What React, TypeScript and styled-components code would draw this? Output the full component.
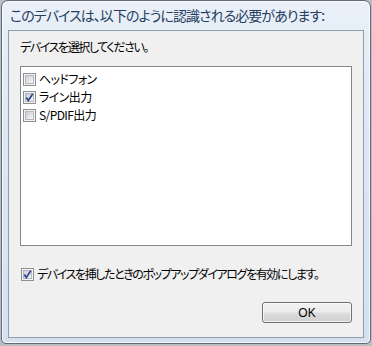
import React from 'react';
import styled, { createGlobalStyle } from 'styled-components';

const Global = createGlobalStyle`
  html, body {
    margin: 0;
    padding: 0;
    background: #b9bcc0;
  }
  * {
    box-sizing: border-box;
  }
`;

const font = `"Noto Sans CJK JP", "Liberation Sans", sans-serif`;

const Window = styled.div`
  width: 370px;
  height: 344px;
  margin-left: 1px;
  display: flex;
  flex-direction: column;
  padding: 0 6px 5px 6px;
  border: 1px solid #5f6b78;
  border-radius: 7px 7px 5px 5px;
  background: linear-gradient(180deg, #e9f0f9 0%, #dde7f3 40%, #d5e1ef 100%);
  box-shadow: inset 0 0 0 1px rgba(255, 255, 255, 0.75);
`;

const TitleBar = styled.div`
  height: 29px;
  display: flex;
  align-items: center;
  padding-left: 2px;
  padding-bottom: 1px;
  font-family: ${font};
  font-feature-settings: "palt";
  font-size: 14px;
  color: #263d5c;
  white-space: nowrap;
  letter-spacing: -0.95px;
`;

const Panel = styled.div`
  flex: 1;
  display: flex;
  flex-direction: column;
  border: 1px solid #8f9db0;
  background: #f0f0f0;
  padding-top: 8px;
  font-family: ${font};
  font-feature-settings: "palt";
  font-size: 12px;
  letter-spacing: -1.4px;
  color: #000;
`;

const Label = styled.div`
  height: 16px;
  line-height: 16px;
  padding-left: 11px;
  white-space: nowrap;
`;

const ListBox = styled.div`
  margin: 11px 11px 0 11px;
  height: 180px;
  border: 1px solid #828790;
  background: #fff;
  padding: 3px 2px;
  letter-spacing: -0.6px;
`;

const Row = styled.label`
  display: flex;
  align-items: center;
  height: 18px;
  gap: 3px;
  white-space: nowrap;
`;

const Box = styled.span`
  position: relative;
  flex: none;
  width: 13px;
  height: 13px;
  border: 1px solid #8e8f8f;
  background: #f4f4f4;
  &::before {
    content: '';
    position: absolute;
    inset: 1px;
    background: linear-gradient(135deg, #c9ccd2 0%, #e4e5e8 55%, #f6f6f6 100%);
    border: 1px solid #b4b7bd;
  }
  svg {
    position: absolute;
    left: 0;
    top: 0;
  }
`;

const Text = styled.span`
  line-height: 18px;
`;

const Options = styled.div`
  margin-top: 19px;
  padding-left: 12px;
`;

const Footer = styled.div`
  display: flex;
  justify-content: flex-end;
  margin-top: 19px;
  padding-right: 11px;
`;

const Button = styled.button`
  width: 90px;
  height: 21px;
  padding: 0;
  border: 1px solid #707070;
  border-radius: 3px;
  background: linear-gradient(180deg, #f2f2f2 0%, #ebebeb 48%, #dddddd 52%, #cfcfcf 100%);
  box-shadow: inset 0 0 0 1px rgba(255, 255, 255, 0.7);
  font-family: "Liberation Sans", sans-serif;
  font-size: 12px;
  color: #000;
`;

function Check({ checked }: { checked?: boolean }) {
  return (
    <Box>
      {checked && (
        <svg width="11" height="11" viewBox="0 0 11 11">
          <path d="M2.3 5.6 L4.3 8.4 L8.8 1.8" fill="none" stroke="#2c4595" strokeWidth="1.7" />
        </svg>
      )}
    </Box>
  );
}

const devices = [
  { name: 'ヘッドフォン', checked: false },
  { name: 'ライン出力', checked: true },
  { name: 'S/PDIF出力', checked: false },
];

export default function App() {
  return (
    <>
      <Global />
      <Window>
        <TitleBar>このデバイスは、以下のように認識される必要があります:</TitleBar>
        <Panel>
          <Label>デバイスを選択してください。</Label>
          <ListBox>
            {devices.map(d => (
              <Row key={d.name}>
                <Check checked={d.checked} />
                <Text>{d.name}</Text>
              </Row>
            ))}
          </ListBox>
          <Options>
            <Row>
              <Check checked />
              <Text>デバイスを挿したときのポップアップダイアログを有効にします。</Text>
            </Row>
          </Options>
          <Footer>
            <Button>OK</Button>
          </Footer>
        </Panel>
      </Window>
    </>
  );
}
